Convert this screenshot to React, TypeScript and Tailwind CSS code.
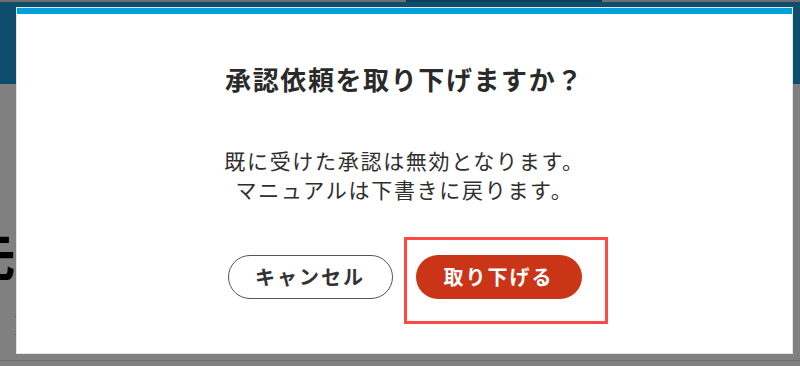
import React from "react";

const font = {
  fontFamily: '"Noto Sans CJK JP", "Noto Sans", sans-serif',
};

function BackgroundPage() {
  return (
    <div className="flex h-full w-full flex-col">
      {/* header */}
      <div className="flex h-[84px] flex-col bg-[#0e4e6c]">
        <div className="flex h-[2px]">
          <div className="w-[406px] bg-[#6f6f6f]" />
          <div className="w-[196px] bg-[#0b3f58]" />
          <div className="flex-1 bg-[#6f6f6f]" />
        </div>
      </div>
      {/* body */}
      <div className="flex flex-1 flex-col bg-[#808080]">
        <div className="mt-[142px] -ml-[38px] text-[54px] font-bold leading-none text-black">
          先
        </div>
        <div className="mt-[36px] ml-[14px] h-px w-[3px] bg-[#666]" />
        <div className="mt-[17px] ml-[14px] h-px w-[3px] bg-[#666]" />
        <div className="mt-auto mb-[5px] h-px bg-[#6e6e6e]" />
      </div>
    </div>
  );
}

function ConfirmDialog() {
  return (
    <div className="flex h-[347px] w-[777px] flex-col border border-[#e4e4e4] bg-white">
      <div className="h-[6px] bg-[#00a0d9]" />
      <div className="flex flex-1 flex-col items-center">
        <h2 className="mt-[47px] text-[26px] font-bold leading-[36px] tracking-[1.6px] text-[#2a2a2a]">
          承認依頼を取り下げますか？
        </h2>
        <p className="mt-[49px] text-center text-[21px] leading-[29px] tracking-[1.7px] text-[#2f2f2f]">
          既に受けた承認は無効となります。
          <br />
          マニュアルは下書きに戻ります。
        </p>
        <div className="mt-[51px] flex gap-[23px]">
          <button className="flex h-[44px] w-[165px] items-center justify-center rounded-full border-[1.5px] border-[#555] bg-white text-[20px] font-bold tracking-[2px] text-[#333]">
            キャンセル
          </button>
          <div className="relative">
            <button className="flex h-[44px] w-[166px] items-center justify-center rounded-full bg-[#c93516] text-[20px] font-bold tracking-[2px] text-white">
              取り下げる
            </button>
            {/* annotation box */}
            <div className="pointer-events-none absolute -top-[18px] -left-[12px] h-[87px] w-[204px] border-[3px] border-[#ff4848]" />
          </div>
        </div>
      </div>
    </div>
  );
}

export default function App() {
  return (
    <div className="relative h-[366px] w-[800px] overflow-hidden" style={font}>
      <BackgroundPage />
      <div className="absolute left-[16px] top-[7px]">
        <ConfirmDialog />
      </div>
    </div>
  );
}
